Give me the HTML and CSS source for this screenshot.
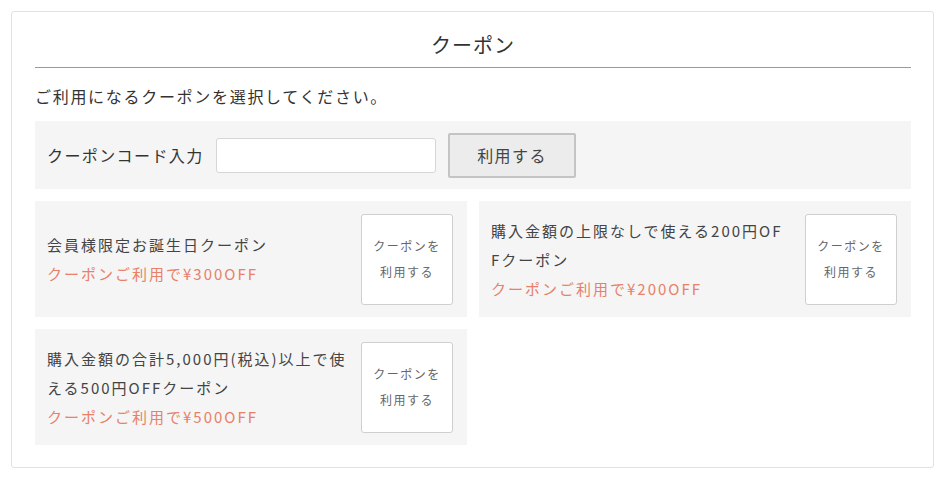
FILE: index.html
```html
<!DOCTYPE html>
<html lang="ja">
<head>
<meta charset="utf-8">
<title>クーポン</title>
<link rel="stylesheet" href="styles.css">
</head>
<body>
<div class="panel">
  <h2 class="title">クーポン</h2>
  <p class="lead">ご利用になるクーポンを選択してください。</p>
  <div class="code-row">
    <label class="code-label" for="code">クーポンコード入力</label>
    <input class="code-input" id="code" type="text">
    <button class="code-btn" type="button">利用する</button>
  </div>
  <div class="cards">
    <div class="card">
      <div class="card-text">
        <div class="card-name">会員様限定お誕生日クーポン</div>
        <div class="card-off">クーポンご利用で¥300OFF</div>
      </div>
      <button class="use-btn" type="button">クーポンを<br>利用する</button>
    </div>
    <div class="card">
      <div class="card-text">
        <div class="card-name">購入金額の上限なしで使える200円OFFクーポン</div>
        <div class="card-off">クーポンご利用で¥200OFF</div>
      </div>
      <button class="use-btn" type="button">クーポンを<br>利用する</button>
    </div>
    <div class="card">
      <div class="card-text">
        <div class="card-name">購入金額の合計5,000円(税込)以上で使える500円OFFクーポン</div>
        <div class="card-off">クーポンご利用で¥500OFF</div>
      </div>
      <button class="use-btn" type="button">クーポンを<br>利用する</button>
    </div>
  </div>
</div>
</body>
</html>
```

FILE: styles.css
```css
* { box-sizing: border-box; }
html, body { margin: 0; padding: 0; background: #fff; }
body {
  font-family: "Noto Sans CJK JP", "Noto Sans", sans-serif;
  color: #333;
  padding: 11px 16px 16px 11px;
}
.panel {
  width: 923px;
  border: 1px solid #e2e2e2;
  border-radius: 3px;
  padding: 0 22px 22px 23px;
}
.title {
  margin: 0;
  padding: 18px 0 7px;
  font-size: 20px;
  font-weight: 400;
  line-height: 30px;
  letter-spacing: 1px;
  text-align: center;
  border-bottom: 1px solid #9a9a9a;
}
.lead {
  margin: 16px 0 0;
  font-size: 16px;
  line-height: 24px;
  letter-spacing: 1.7px;
}
.code-row {
  margin-top: 13px;
  height: 68px;
  background: #f5f5f5;
  display: flex;
  align-items: center;
  padding-left: 12px;
}
.code-label {
  font-size: 16px;
  letter-spacing: 1.4px;
  width: 169px;
}
.code-input {
  width: 220px;
  height: 35px;
  border: 1px solid #d6d6d6;
  border-radius: 3px;
  background: #fff;
  margin-right: 12px;
}
.code-btn {
  width: 128px;
  height: 45px;
  background: #ececec;
  border: 2px solid #c4c4c4;
  border-radius: 2px;
  font-family: inherit;
  font-size: 16px;
  letter-spacing: 1.4px;
  color: #444;
  padding: 0;
}
.cards {
  margin-top: 12px;
  display: grid;
  grid-template-columns: 1fr 1fr;
  gap: 12px;
}
.card {
  height: 116px;
  background: #f5f5f5;
  display: flex;
  align-items: center;
  padding: 0 14px 0 12px;
}
.card-text {
  flex: 1;
  font-size: 15px;
  line-height: 29px;
  letter-spacing: 2px;
  word-break: break-all;
  margin-right: 14px;
  color: #444;
}
.card-off { color: #e8806a; }
.use-btn {
  width: 92px;
  height: 91px;
  flex: none;
  background: #fff;
  border: 1px solid #cfcfcf;
  border-radius: 3px;
  font-family: inherit;
  font-size: 12px;
  line-height: 26px;
  letter-spacing: 1.5px;
  color: #666;
  padding: 0;
}
```
